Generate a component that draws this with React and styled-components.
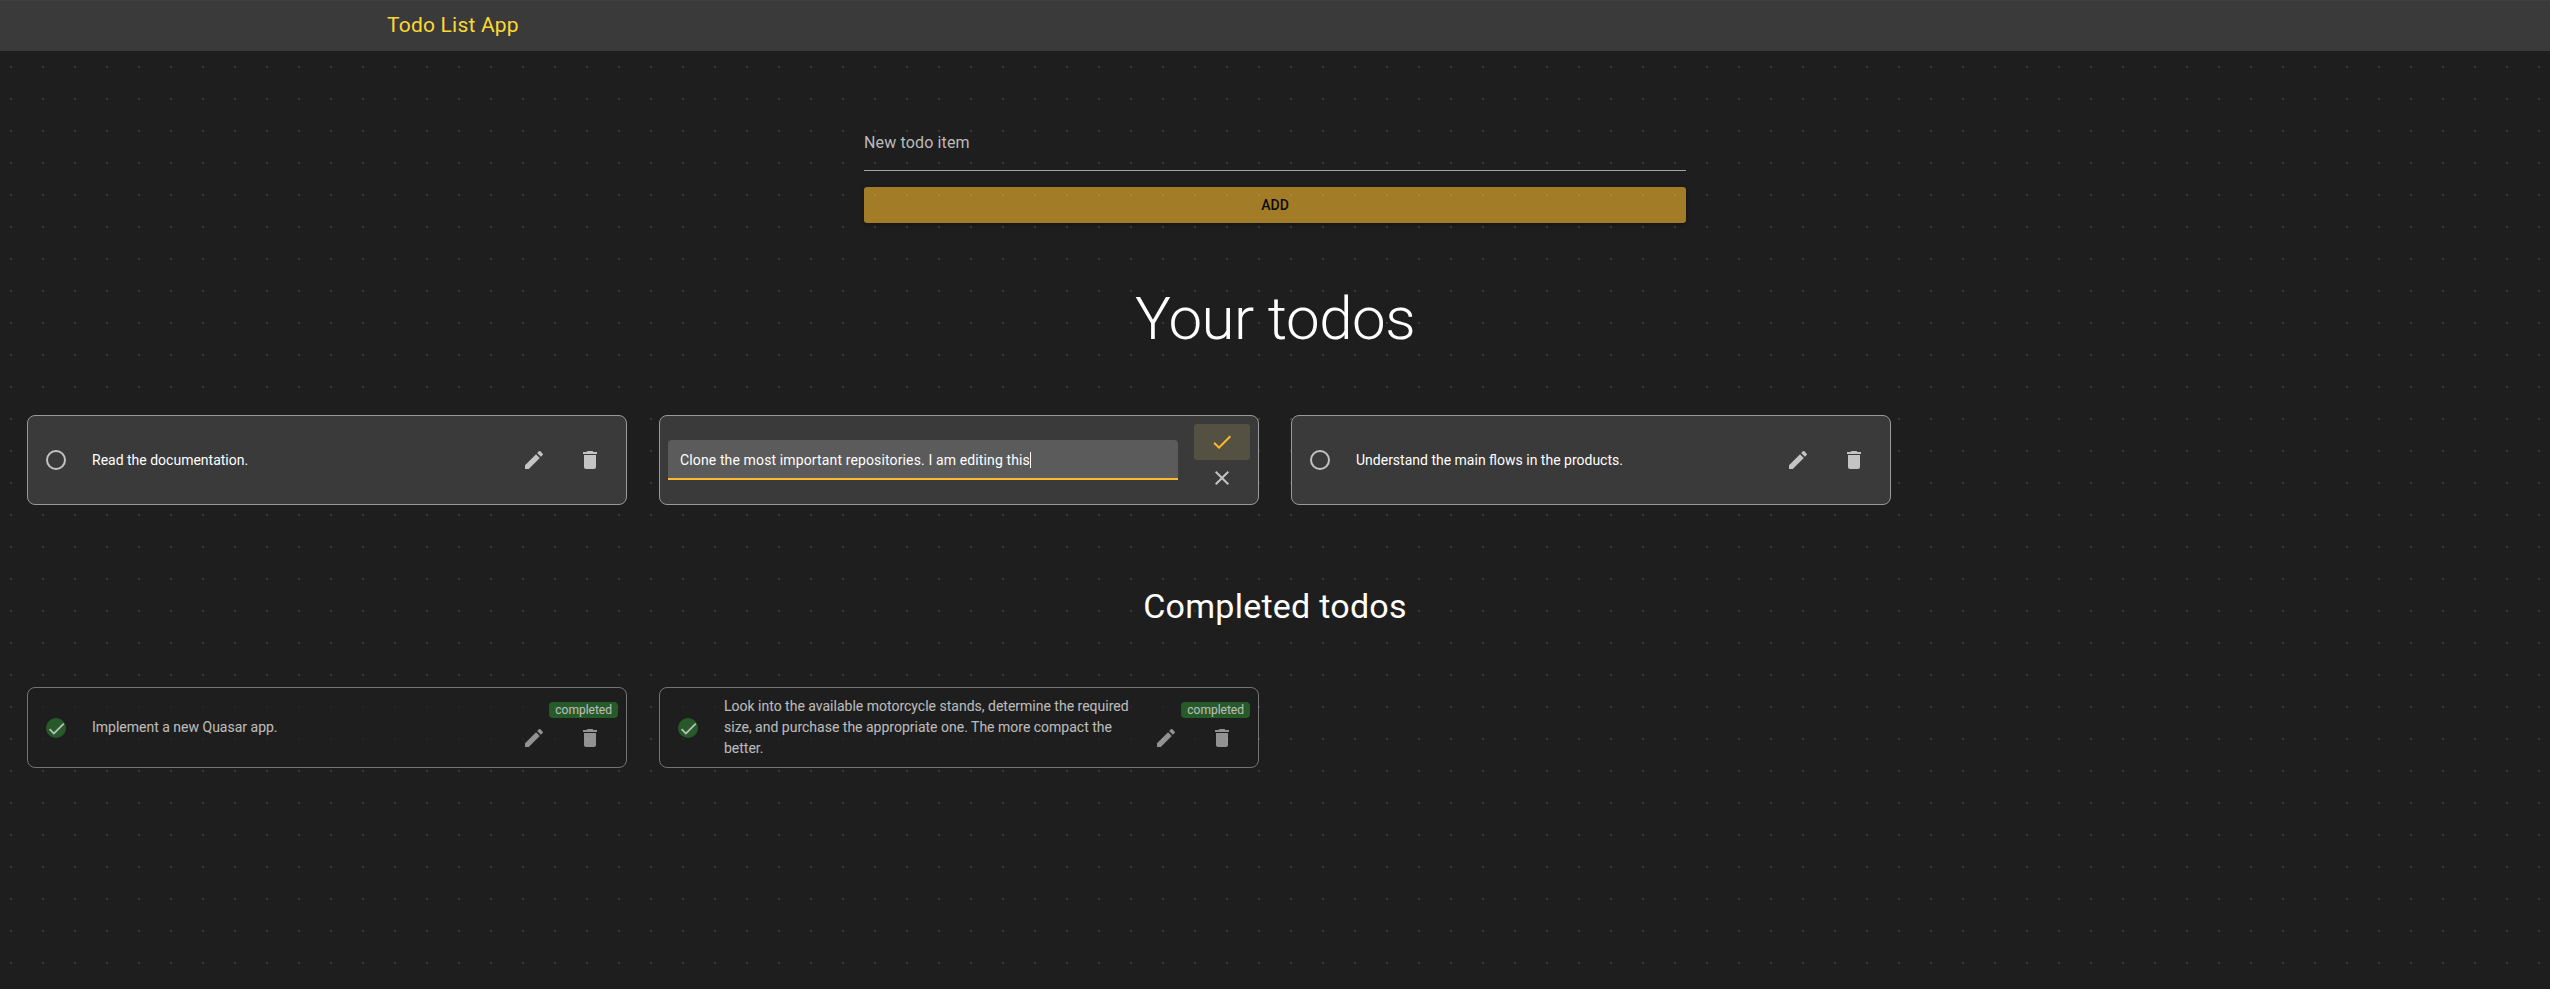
import React from "react";
import styled, { createGlobalStyle, css } from "styled-components";

const GlobalStyle = createGlobalStyle`
  *, *::before, *::after { box-sizing: border-box; }
  body {
    margin: 0;
    color: #fff;
    background: #1e1e1e;
    font: 400 14px/21px Roboto, "Liberation Sans", sans-serif;
  }
  h1, h2, p { margin: 0; }
  button, input { font: inherit; color: inherit; border: 0; background: none; padding: 0; }
`;

const Page = styled.div`
  height: 989px;
  overflow: hidden;
  background-color: #1e1e1e;
  background-image: conic-gradient(from 90deg at 30px 30px, #3a3a3a 90deg, transparent 0);
  background-size: 32px 32px;
  background-position: 12px 4px;
  border-bottom: 2px solid #201c1e;
`;

const Header = styled.header`
  height: 51px;
  padding: 0 387px 2px;
  display: flex;
  align-items: center;
  background: #3a3a3a;
  border-top: 1px solid #3b423e;
`;

const Brand = styled.span`
  color: #fdd835;
  font-size: 21px;
  line-height: 32px;
  letter-spacing: 0.21px;
`;

const NewTodoForm = styled.form`
  width: 822px;
  margin: 64px auto 0;
  display: flex;
  flex-direction: column;
  gap: 16px;
`;

const NewTodoField = styled.input`
  height: 56px;
  border-bottom: 1px solid #a5a5a5;
  font-size: 16px;
  letter-spacing: 0.15px;
  outline: 0;
  &::placeholder { color: #bbb; opacity: 1; }
`;

const AddButton = styled.button`
  height: 36px;
  border-radius: 3px;
  background: #fbbb2d;
  color: #000;
  font-weight: 500;
  opacity: 0.6;
  box-shadow: 0 1px 5px rgba(0, 0, 0, 0.2), 0 2px 2px rgba(0, 0, 0, 0.14), 0 3px 1px -2px rgba(0, 0, 0, 0.12);
`;

const MainTitle = styled.h1`
  margin-top: 66px;
  text-align: center;
  font-size: 60px;
  line-height: 60px;
  font-weight: 300;
  letter-spacing: -0.5px;
`;

const SubTitle = styled.h2`
  margin-top: 81px;
  text-align: center;
  font-size: 34px;
  line-height: 40px;
  font-weight: 400;
  letter-spacing: 0.25px;
`;

const CardRow = styled.section`
  display: grid;
  grid-template-columns: repeat(3, 600px);
  column-gap: 32px;
  padding-left: 27px;
  margin-top: ${(p) => p.$top}px;
`;

const Card = styled.article`
  height: 90px;
  display: flex;
  align-items: center;
  padding: 0 8px;
  border: 1px solid #999;
  border-radius: 8px;
  background: #3a3a3a;
  ${(p) =>
    p.$done &&
    css`
      height: 81px;
      background: #1e1e1e;
      opacity: 0.7;
    `}
`;

const Status = styled.span`
  width: 20px;
  height: 20px;
  margin: 0 26px 0 10px;
  flex: none;
  display: flex;
  align-items: center;
  justify-content: center;
  border-radius: 50%;
  border: 2px solid #c4c4c4;
  ${(p) =>
    p.$done &&
    css`
      margin-top: 1px;
      border: 0;
      background: #2a762e;
      svg { flex: none; }
    `}
`;

const TodoText = styled.p`
  flex: 1;
`;

const Actions = styled.div`
  width: 112px;
  display: flex;
  flex-direction: column;
  align-items: flex-end;
  flex: none;
  gap: 2px;
  padding-top: ${(p) => (p.$done ? 3 : 0)}px;
`;

const ActionRow = styled.div`
  display: flex;
`;

const Badge = styled.span`
  height: 16px;
  padding: 2px 6px;
  border-radius: 4px;
  background: #2a762e;
  font-size: 12px;
  line-height: 12px;
`;

const IconButton = styled.button`
  width: 56px;
  height: 36px;
  display: flex;
  align-items: center;
  justify-content: center;
  border-radius: 3px;
  color: ${(p) => (p.$active ? "#fbbb2d" : "#c4c4c4")};
  background: ${(p) => (p.$active ? "#545042" : "transparent")};
`;

const EditField = styled.div`
  width: 510px;
  height: 40px;
  padding: 2px 12px 0;
  display: flex;
  align-items: center;
  border-radius: 4px 4px 0 0;
  border-bottom: 2px solid #fbbb2d;
  background: #5b5b5b;
  letter-spacing: 0.13px;
`;

const Caret = styled.i`
  width: 1px;
  height: 16px;
  background: #fff;
`;

const EditActions = styled.div`
  margin-left: auto;
  display: flex;
  flex-direction: column;
`;

const paths = {
  edit: "M3 17.25V21h3.75L17.81 9.94l-3.75-3.75L3 17.25zM20.71 7.04c.39-.39.39-1.02 0-1.41l-2.34-2.34c-.39-.39-1.02-.39-1.41 0l-1.83 1.83 3.75 3.75 1.83-1.83z",
  delete: "M6 19c0 1.1.9 2 2 2h8c1.1 0 2-.9 2-2V7H6v12zM19 4h-3.5l-1-1h-5l-1 1H5v2h14V4z",
  check: "M9 16.17 4.83 12l-1.42 1.41L9 19 21 7l-1.41-1.41z",
  close: "M19 6.41 17.59 5 12 10.59 6.41 5 5 6.41 10.59 12 5 17.59 6.41 19 12 13.41 17.59 19 19 17.59 13.41 12z",
};

const Icon = ({ name, size = 24 }) => (
  <svg width={size} height={size} viewBox="0 0 24 24" fill="currentColor" aria-hidden="true">
    <path d={paths[name]} />
  </svg>
);

const TodoCard = ({ text, done }) => (
  <Card $done={done}>
    <Status $done={done}>{done && <Icon name="check" size={21} />}</Status>
    <TodoText>{text}</TodoText>
    <Actions $done={done}>
      {done && <Badge>completed</Badge>}
      <ActionRow>
        <IconButton aria-label="Edit"><Icon name="edit" /></IconButton>
        <IconButton aria-label="Delete"><Icon name="delete" /></IconButton>
      </ActionRow>
    </Actions>
  </Card>
);

const EditingCard = ({ text }) => (
  <Card>
    <EditField>
      {text}
      <Caret />
    </EditField>
    <EditActions>
      <IconButton $active aria-label="Save"><Icon name="check" /></IconButton>
      <IconButton aria-label="Cancel"><Icon name="close" /></IconButton>
    </EditActions>
  </Card>
);

export default function App() {
  return (
    <Page>
      <GlobalStyle />
      <Header>
        <Brand>Todo List App</Brand>
      </Header>
      <NewTodoForm>
        <NewTodoField placeholder="New todo item" />
        <AddButton type="button">ADD</AddButton>
      </NewTodoForm>
      <MainTitle>Your todos</MainTitle>
      <CardRow $top={66}>
        <TodoCard text="Read the documentation." />
        <EditingCard text="Clone the most important repositories. I am editing this" />
        <TodoCard text="Understand the main flows in the products." />
      </CardRow>
      <SubTitle>Completed todos</SubTitle>
      <CardRow $top={61}>
        <TodoCard done text="Implement a new Quasar app." />
        <TodoCard
          done
          text="Look into the available motorcycle stands, determine the required size, and purchase the appropriate one. The more compact the better."
        />
      </CardRow>
    </Page>
  );
}
